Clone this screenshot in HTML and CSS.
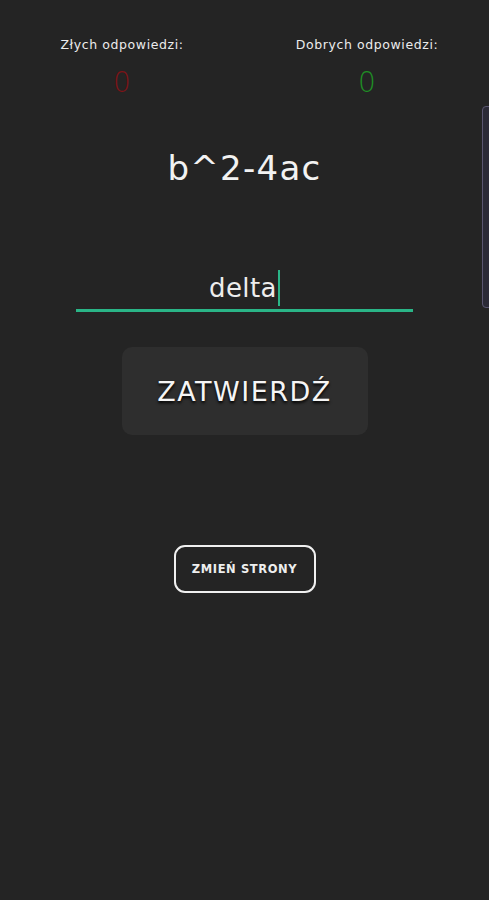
FILE: index.html
```html
<!DOCTYPE html>
<html lang="pl">
<head>
  <meta charset="UTF-8" />
  <meta name="viewport" content="width=device-width, initial-scale=1.0"/>
  <title>Delta - quiz</title>
  <link rel="stylesheet" href="styles.css">
</head>
<body>

  <div class="score-row">
    <div class="score">
      <p class="score-label">Złych odpowiedzi:</p>
      <p class="score-value bad">0</p>
    </div>
    <div class="score">
      <p class="score-label">Dobrych odpowiedzi:</p>
      <p class="score-value good">0</p>
    </div>
  </div>

  <h1 class="question">b^2-4ac</h1>

  <div class="answer">
    <span class="answer-text">delta</span><span class="caret"></span>
  </div>

  <button class="submit">ZATWIERDŹ</button>

  <button class="switch">ZMIEŃ STRONY</button>

  <div class="side-tab"></div>

</body>
</html>
```

FILE: styles.css
```css
body {
  font-family: 'DejaVu Sans', sans-serif;
  margin: 0;
  padding: 0;
  background: #242424;
  color: #f2f2f2;
  min-height: 900px;
  display: flex;
  flex-direction: column;
  align-items: center;
  position: relative;
  overflow: hidden;
}
.score-row {
  width: 100%;
  display: flex;
  justify-content: space-between;
  padding: 37px 0 0;
}
.score {
  width: 244px;
  text-align: center;
}
.score-label {
  margin: 0;
  font-size: 12.5px;
  letter-spacing: 0.6px;
  color: #ececec;
}
.score-value {
  margin: 14px 0 0;
  font-size: 28px;
  font-weight: 300;
  line-height: 34px;
}
.bad {
  color: #7d1317;
}
.good {
  color: #1f8f25;
}
.question {
  margin: 44px 0 0;
  font-size: 34px;
  font-weight: normal;
  line-height: 48px;
  letter-spacing: 1.3px;
}
.answer {
  margin-top: 74px;
  width: 337px;
  border-bottom: 3px solid #2ab587;
  display: flex;
  justify-content: center;
  align-items: flex-end;
  height: 40px;
  padding-bottom: 3px;
}
.answer-text {
  font-size: 26px;
  line-height: 36px;
  color: #ededed;
  letter-spacing: 0.4px;
}
.caret {
  width: 2px;
  height: 36px;
  background: #2ab587;
  margin-left: 1px;
}
.submit {
  margin-top: 35px;
  width: 246px;
  height: 88px;
  border: none;
  border-radius: 10px;
  background: #2e2e2e;
  color: #f5f5f5;
  font-family: inherit;
  font-size: 27px;
  letter-spacing: 1.5px;
  text-shadow: 0 2px 3px #000;
}
.switch {
  margin-top: 110px;
  width: 142px;
  height: 48px;
  border: 2px solid #f0f0f0;
  border-radius: 11px;
  background: transparent;
  color: #eeeeee;
  font-family: inherit;
  font-size: 11.5px;
  font-weight: bold;
  letter-spacing: 0.6px;
}
.side-tab {
  position: absolute;
  top: 106px;
  right: -5px;
  width: 10px;
  height: 200px;
  border: 1px solid #5a5670;
  border-radius: 4px;
  background: #2b2a36;
}
```
